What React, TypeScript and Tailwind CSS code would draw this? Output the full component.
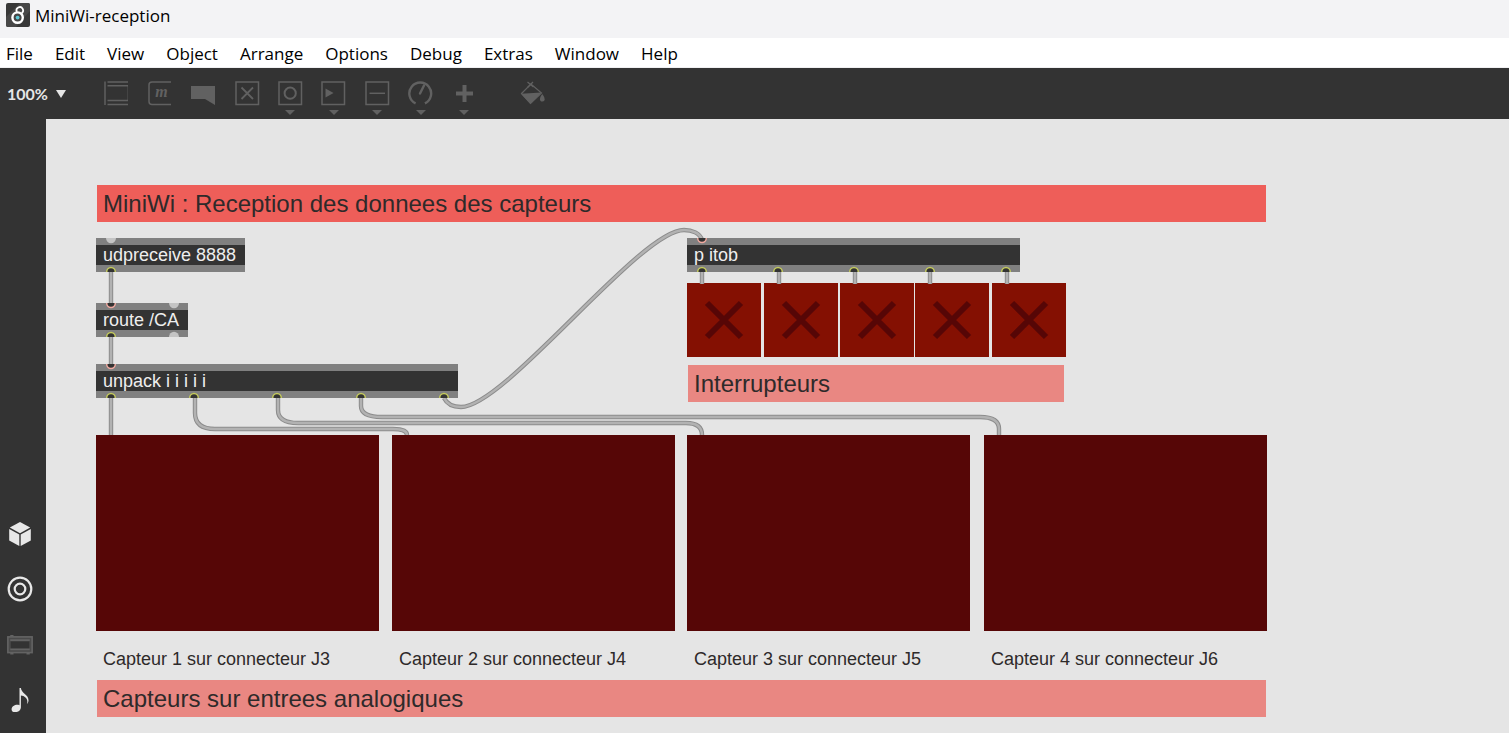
import type { ReactNode } from "react";

const MENUS = ["File", "Edit", "View", "Object", "Arrange", "Options", "Debug", "Extras", "Window", "Help"];

function AppLogo() {
  return (
    <svg className="size-6 shrink-0" viewBox="0 0 24 24" aria-hidden="true">
      <rect width="24" height="24" rx="2" fill="#383838" />
      <path d="M0 14 14 0H22Q24 0 24 2V8L10 24H2Q0 24 0 22Z" fill="#474747" />
      <circle cx="11.6" cy="14.6" r="5.2" fill="none" stroke="#fff" strokeWidth="2.4" />
      <path d="M10.800 8.800A3.300 3.300 0 1 1 15.600 10.200" fill="none" stroke="#fff" strokeWidth="1.7" />
      <circle cx="11.6" cy="14.6" r="1.900" fill="#5cc8d6" />
    </svg>
  );
}

type Tool = { name: string; menu?: boolean; icon: ReactNode };

const frame = <rect x="1" y="1" width="22.5" height="22.5" />;

const TOOLS: Tool[] = [
  {
    name: "Object",
    icon: (
      <>
        <path d="M1 .5V24" />
        <path d="M3.5 1H24M3.5 4.8H24M3.5 19.6H24M3.5 23.4H24" />
        <path d="M23.5 5V19" strokeWidth=".4" />
      </>
    ),
  },
  {
    name: "Message",
    icon: (
      <>
        <path d="M23 1H4Q1 1 1 4V20.500Q1 23.500 4 23.500H23" />
        <text x="13.500" y="16" textAnchor="middle" fontSize="16" fontStyle="italic" fontWeight="700" fontFamily="Liberation Serif, serif" fill="currentColor" stroke="none">
          m
        </text>
      </>
    ),
  },
  { name: "Comment", icon: <path d="M0 5H24V24L14 18H0Z" fill="currentColor" stroke="none" /> },
  { name: "Toggle", icon: <>{frame}<path d="M6.500 6.500 18 18M18 6.500 6.500 18" strokeWidth="1.800" /></> },
  { name: "Button", menu: true, icon: <>{frame}<circle cx="12.2" cy="12.2" r="5.600" strokeWidth="2" /></> },
  { name: "Playlist", menu: true, icon: <>{frame}<path d="M4.500 7.500 12.500 12 4.500 16.500Z" fill="currentColor" stroke="none" /></> },
  { name: "Number", menu: true, icon: <>{frame}<path d="M4.500 12.3H20" /></> },
  {
    name: "Dial",
    menu: true,
    icon: (
      <>
        <path d="M7.600 22.3A10.900 10.900 0 1 1 16.900 22.3" strokeWidth="2.4" />
        <path d="M12 12.500 16 4.500" strokeWidth="2.4" strokeLinecap="round" />
      </>
    ),
  },
  { name: "Add", menu: true, icon: <path d="M12.500 4V21M4 12.500H21" strokeWidth="4" /> },
];

function ToolIcon({ children }: { children: ReactNode }) {
  return (
    <svg className="h-[25px] w-[25px]" viewBox="0 0 25 25" fill="none" stroke="currentColor" strokeWidth="1.5" aria-hidden="true">
      {children}
    </svg>
  );
}

function Toolbar() {
  return (
    <div className="flex h-[51px] shrink-0 items-start bg-[#333333] pl-[7px] text-[#616161]" role="toolbar" aria-label="Patcher">
      <button className="mt-[14px] flex h-6 w-[88px] items-center gap-2 font-['Lato',sans-serif] text-base font-bold text-[#e6e6e6]">
        100%
        <svg className="h-2 w-[10px]" viewBox="0 0 10 8" aria-hidden="true">
          <path d="M0 0H10L5 8Z" fill="currentColor" />
        </svg>
      </button>
      <div className="grid w-[391px] grid-cols-9">
        {TOOLS.map((tool) => (
          <button key={tool.name} aria-label={tool.name} className="flex flex-col items-center gap-1 pt-[13px]">
            <ToolIcon>{tool.icon}</ToolIcon>
            {tool.menu && (
              <svg className="h-[5px] w-[10px]" viewBox="0 0 10 5" aria-hidden="true">
                <path d="M0 0H10L5 5Z" fill="currentColor" />
              </svg>
            )}
          </button>
        ))}
      </div>
      <button aria-label="Format" className="ml-[34px] pt-[13px]">
        <ToolIcon>
          <path d="M1.500 12.500 11 3 21.500 12 10.500 22.500Z" strokeWidth="1.2" />
          <path d="M1 12.800 21.500 11.500 10.500 23Z" fill="currentColor" stroke="none" />
          <path d="M7.500 1 13.500 6M13 1 7.500 6.500" strokeWidth="1.3" />
          <path d="M22.200 13C25.500 17 25.300 20.500 22.300 20.500S19.200 17 22.200 13Z" fill="currentColor" stroke="none" />
        </ToolIcon>
      </button>
    </div>
  );
}

function Sidebar() {
  return (
    <aside className="flex w-[46px] shrink-0 flex-col justify-end bg-[#333333] pr-[6px] pb-[5px] text-[#e8e8e8]">
      <div className="grid h-[222px] grid-rows-4">
        <button aria-label="Packages" className="flex items-center justify-center">
          <svg className="size-6" viewBox="0 0 24 24" fill="currentColor" aria-hidden="true">
            <path d="M12 0 22.200 5.600 12 11.200 1.800 5.600Z" />
            <path d="M1.200 7 11.300 12.600V24L1.200 18.400Z" />
            <path d="M22.800 7 12.700 12.600V24L22.800 18.400Z" />
          </svg>
        </button>
        <button aria-label="Targets" className="flex items-center justify-center">
          <svg className="size-[26px]" viewBox="0 0 26 26" fill="none" stroke="currentColor" strokeWidth="2.200" aria-hidden="true">
            <circle cx="13" cy="13" r="11.300" />
            <circle cx="13" cy="13" r="5.300" />
          </svg>
        </button>
        <button aria-label="Devices" className="flex items-center justify-center text-[#636363]">
          <svg className="size-[26px]" viewBox="0 0 24 24" fill="none" stroke="currentColor" strokeWidth="1.500" aria-hidden="true">
            <rect x=".8" y="4.500" width="22.400" height="14.500" fill="#4a4a4a" />
            <path d="M3 7.500H21M3 16H21" />
            <path d="M3 3.500H6M3 20H6M18 20H21" />
            <path d="M3.500 8.800H20.500V15H3.500Z" fill="#333333" stroke="none" />
          </svg>
        </button>
        <button aria-label="Sounds" className="flex items-center justify-center">
          <svg className="size-6" viewBox="0 0 24 24" fill="currentColor" aria-hidden="true">
            <path d="M11.500 0H12.900C13.200 5.500 20.800 6.500 20.500 12.500C20.400 14.200 19.600 15.600 18.900 16C20.600 11.500 17.200 7.600 12.900 7.400V19.500C12.900 22.400 9.800 24.200 7 24.200C4.800 24.200 3.500 23 3.600 21C3.800 17.700 8.500 15.700 11.500 17.200Z" />
          </svg>
        </button>
      </div>
    </aside>
  );
}

const OBJECTS = [
  { text: "udpreceive 8888", place: "left-[50px] top-[119px] w-[149px]" },
  { text: "route /CA", place: "left-[50px] top-[184px] w-[92px]" },
  { text: "unpack i i i i i", place: "left-[50px] top-[245px] w-[362px]" },
  { text: "p itob", place: "left-[641px] top-[119px] w-[333px]" },
];

const COMMENTS = [
  { text: "MiniWi : Reception des donnees des capteurs", place: "left-[51px] top-[66px] w-[1169px] bg-[#ee5e59]" },
  { text: "Interrupteurs", place: "left-[642px] top-[246px] w-[376px] bg-[#e98782]" },
  { text: "Capteurs sur entrees analogiques", place: "left-[51px] top-[561px] w-[1169px] bg-[#e98782]" },
];

const TOGGLES = ["left-[641px]", "left-[718px]", "left-[794px]", "left-[869px]", "left-[946px]"];

const DISPLAYS = [
  { text: "Capteur 1 sur connecteur J3", place: "left-[50px]" },
  { text: "Capteur 2 sur connecteur J4", place: "left-[346px]" },
  { text: "Capteur 3 sur connecteur J5", place: "left-[641px]" },
  { text: "Capteur 4 sur connecteur J6", place: "left-[938px]" },
];

const CORDS = [
  "M65 153V185",
  "M65 218V246",
  "M65 279V316",
  "M149 279V294Q149 310 169 310H347Q361 310 361 316",
  "M232 279V291Q232 304 252 304H640Q656 304 656 316",
  "M315 279V287Q315 298 336 298H934Q953 298 953 310V316",
  "M398 279C401 285 407 288 415 288C459 288 594 111 638 111C646 111 654 114 656 121",
  "M656 153V165",
  "M733 153V165",
  "M809 153V165",
  "M884 153V165",
  "M961 153V165",
];

type Port = { x: number; y: number; side: "in" | "out"; color?: string };

const PORTS: Port[] = [
  { x: 65, y: 119, side: "in" },
  { x: 65, y: 153, side: "out", color: "#c3c95c" },
  { x: 65, y: 184, side: "in", color: "#f0a9a0" },
  { x: 128, y: 184, side: "in" },
  { x: 65, y: 218, side: "out", color: "#c3c95c" },
  { x: 128, y: 218, side: "out" },
  { x: 65, y: 245, side: "in", color: "#f0a9a0" },
  { x: 65, y: 279, side: "out", color: "#c3c95c" },
  { x: 148, y: 279, side: "out", color: "#c3c95c" },
  { x: 231, y: 279, side: "out", color: "#c3c95c" },
  { x: 315, y: 279, side: "out", color: "#c3c95c" },
  { x: 398, y: 279, side: "out", color: "#c3c95c" },
  { x: 656, y: 119, side: "in", color: "#f0a9a0" },
  { x: 656, y: 153, side: "out", color: "#c3c95c" },
  { x: 732, y: 153, side: "out", color: "#c3c95c" },
  { x: 808, y: 153, side: "out", color: "#c3c95c" },
  { x: 884, y: 153, side: "out", color: "#c3c95c" },
  { x: 960, y: 153, side: "out", color: "#c3c95c" },
];

function PortMark({ x, y, side, color }: Port) {
  return (
    <g transform={`translate(${x} ${y}) scale(1 ${side === "in" ? -1 : 1})`}>
      {color ? (
        <path d="M-4.300 0A4.300 4.500 0 0 1 4.300 0" fill="#333333" stroke={color} strokeWidth="1.5" />
      ) : (
        <path d="M-5 0A5 5.300 0 0 1 5 0" fill="#c4c4c4" />
      )}
    </g>
  );
}

function Patcher() {
  return (
    <main className="relative min-w-0 flex-1 overflow-hidden bg-[#e5e5e5] font-['Liberation_Sans',Arial,sans-serif] text-[#2e2a2a]">
      {COMMENTS.map((c) => (
        <h2 key={c.text} className={`absolute h-[37px] px-[6px] text-2xl leading-[38px] whitespace-nowrap ${c.place}`}>
          {c.text}
        </h2>
      ))}

      {OBJECTS.map((o) => (
        <div
          key={o.text}
          className={`absolute h-[34px] border-y-[7px] border-[#808080] bg-[#333333] px-[7px] text-lg leading-5 whitespace-nowrap text-[#eeeeee] ${o.place}`}
        >
          {o.text}
        </div>
      ))}

      {TOGGLES.map((place, i) => (
        <label key={place} className={`absolute top-[164px] block size-[74px] bg-[#841002] ${place}`}>
          <input type="checkbox" aria-label={`Interrupteur ${i + 1}`} className="absolute inset-0 size-full appearance-none" />
          <svg className="pointer-events-none size-full" viewBox="0 0 74 74" aria-hidden="true">
            <path d="M20 20 54 54M54 20 20 54" stroke="#560606" strokeWidth="6" />
          </svg>
        </label>
      ))}

      {DISPLAYS.map((d) => (
        <figure key={d.text} className={`absolute top-[316px] w-[283px] ${d.place}`}>
          <div className="h-[196px] bg-[#560606]" />
          <figcaption className="mt-4 px-[7px] text-lg leading-6">{d.text}</figcaption>
        </figure>
      ))}

      <svg className="pointer-events-none absolute top-0 left-0 h-[316px] w-[1220px]" viewBox="0 0 1220 316" fill="none" aria-hidden="true">
        {CORDS.map((d) => (
          <g key={d}>
            <path d={d} stroke="#8c8c8c" strokeWidth="4.400" />
            <path d={d} stroke="#b2b2b2" strokeWidth="2.400" />
          </g>
        ))}
        {PORTS.map((p) => (
          <PortMark key={`${p.x}-${p.y}`} {...p} />
        ))}
      </svg>
    </main>
  );
}

export default function App() {
  return (
    <div className="flex h-screen flex-col overflow-hidden bg-[#e5e5e5]">
      <header className="flex h-[38px] shrink-0 items-start gap-[5px] bg-[#f3f3f5] pt-[3px] pl-[6px] font-['Open_Sans','Noto_Sans',sans-serif] text-black">
        <AppLogo />
        <h1 className="text-[17px] leading-[26px]">MiniWi-reception</h1>
      </header>
      <nav
        aria-label="Main menu"
        className="flex h-[30px] shrink-0 items-center gap-[22px] border-b border-[#f0f0f2] bg-white pt-[2px] pl-[6px] font-['Open_Sans','Noto_Sans',sans-serif] text-[17px] text-black"
      >
        {MENUS.map((m) => (
          <button key={m}>{m}</button>
        ))}
      </nav>
      <Toolbar />
      <div className="flex min-h-0 flex-1">
        <Sidebar />
        <Patcher />
      </div>
    </div>
  );
}
